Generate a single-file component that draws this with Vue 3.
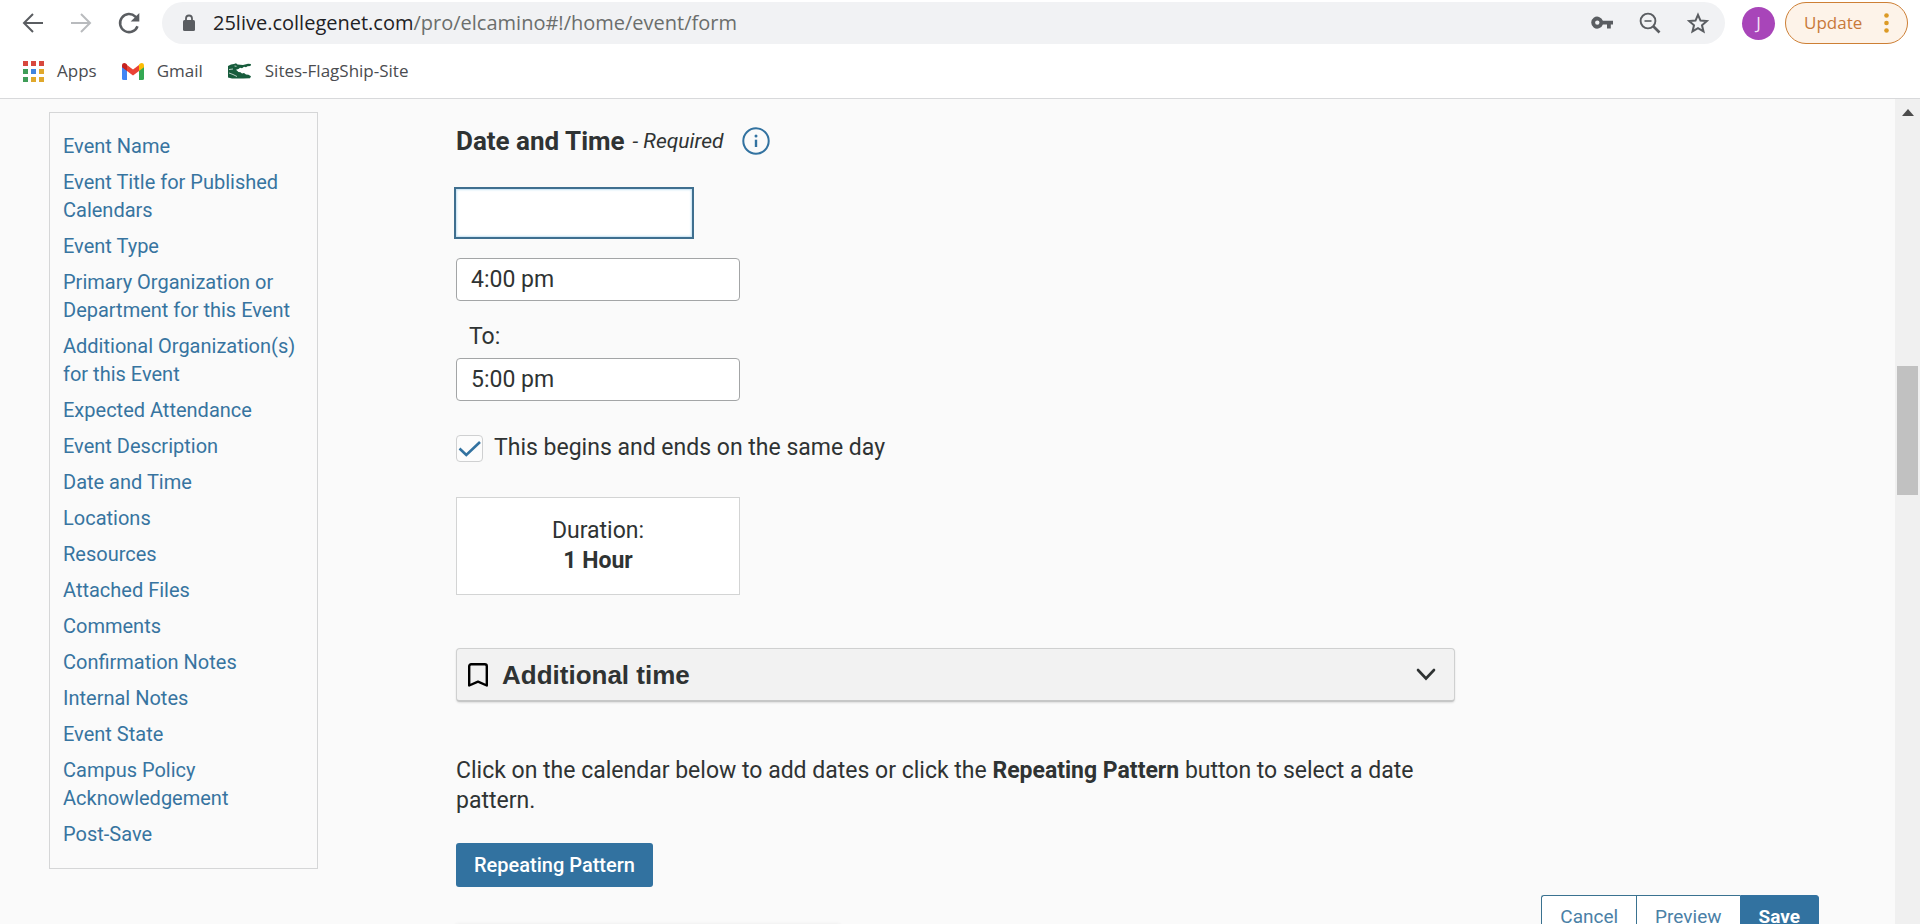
<script setup>
import { ref } from 'vue'

const sections = [
  'Event Name',
  'Event Title for Published Calendars',
  'Event Type',
  'Primary Organization or Department for this Event',
  'Additional Organization(s) for this Event',
  'Expected Attendance',
  'Event Description',
  'Date and Time',
  'Locations',
  'Resources',
  'Attached Files',
  'Comments',
  'Confirmation Notes',
  'Internal Notes',
  'Event State',
  'Campus Policy Acknowledgement',
  'Post-Save',
]

const eventDate = ref('')
const startTime = ref('4:00 pm')
const endTime = ref('5:00 pm')
const sameDay = ref(true)

const appColors = ['#d8483e', '#d8483e', '#d8483e', '#3f9d58', '#3f84e0', '#e0a82c', '#3f9d58', '#e0a82c', '#e0a82c']
</script>

<template>
  <div class="window">
    <header class="chrome">
      <div class="toolbar">
        <button class="icon-btn" aria-label="Back">
          <svg width="24" height="24" viewBox="0 0 24 24" fill="none" stroke="#5a5d61" stroke-width="2"><path d="M22 12H3M12 3l-9 9 9 9" /></svg>
        </button>
        <button class="icon-btn" aria-label="Forward">
          <svg width="24" height="24" viewBox="0 0 24 24" fill="none" stroke="#b9bbbe" stroke-width="2"><path d="M2 12h19M12 3l9 9-9 9" /></svg>
        </button>
        <button class="icon-btn" aria-label="Reload">
          <svg width="24" height="24" viewBox="0 0 24 24"><path d="M20.5 15.2A9 9 0 1 1 18.4 5.7L20 7.5" fill="none" stroke="#5a5d61" stroke-width="2.5" /><path d="M22.3 2v8.6h-8.6z" fill="#5a5d61" /></svg>
        </button>
        <div class="omnibox">
          <svg class="lock" width="14" height="18" viewBox="0 0 14 18"><rect x="1" y="6" width="12" height="11" rx="1.5" fill="#5a5d61" /><path d="M4 7V4.5a3 3 0 0 1 6 0V7" fill="none" stroke="#5a5d61" stroke-width="1.8" /></svg>
          <div class="url"><span class="host">25live.collegenet.com</span>/pro/elcamino#!/home/event/form</div>
          <button class="icon-btn" aria-label="Saved passwords">
            <svg width="24" height="24" viewBox="0 0 24 24"><path fill="#5a5d61" d="M12.9 9.7A6 6 0 1 0 12.9 13.5H17v4h3.8v-4H23V9.7zM7.3 13.8a2.2 2.2 0 1 1 0-4.4 2.2 2.2 0 0 1 0 4.4z" /></svg>
          </button>
          <button class="icon-btn" aria-label="Zoom">
            <svg width="24" height="24" viewBox="0 0 24 24" fill="none" stroke="#5a5d61"><circle cx="10" cy="10" r="7.4" stroke-width="1.9" /><path d="M6.5 10h7" stroke-width="1.6" /><path d="M15.5 15.5l6 6" stroke-width="2.6" /></svg>
          </button>
          <button class="icon-btn" aria-label="Bookmark this page">
            <svg width="24" height="24" viewBox="0 0 24 24"><path d="M12 3.8l2.5 5.8 6.3.5-4.8 4.2 1.5 6.1-5.5-3.3-5.5 3.3 1.5-6.1-4.8-4.2 6.3-.5z" fill="none" stroke="#5a5d61" stroke-width="2" /></svg>
          </button>
        </div>
        <button class="avatar" aria-label="Profile">J</button>
        <button class="update">
          <span>Update</span>
          <svg width="5" height="20" viewBox="0 0 5 20" fill="#dc9a25"><circle cx="2.5" cy="2.5" r="2.3" /><circle cx="2.5" cy="10" r="2.3" /><circle cx="2.5" cy="17.5" r="2.3" /></svg>
        </button>
      </div>
      <nav class="bookmarks" aria-label="Bookmarks">
        <a href="#apps">
          <svg width="21" height="21" viewBox="0 0 21 21"><rect v-for="(c, i) in appColors" :key="i" :x="(i % 3) * 8" :y="Math.floor(i / 3) * 8" width="5" height="5" :fill="c" /></svg>
          <span>Apps</span>
        </a>
        <a href="#gmail">
          <svg width="22" height="17" viewBox="0 0 22 17">
            <path d="M0 3v12.5A1.5 1.5 0 0 0 1.5 17H5V6z" fill="#4285f4" />
            <path d="M22 3v12.5a1.5 1.5 0 0 1-1.5 1.5H17V6z" fill="#34a853" />
            <path d="M5 2l6 4.5L17 2v6l-6 4.5L5 8z" fill="#ea4335" />
            <path d="M0 2.500C0 .2 2.500-.6 4.200.8L5 1.500V8L0 4.200z" fill="#c5221f" />
            <path d="M22 2.500C22 .2 19.500-.6 17.800.8L17 1.500V8l5-3.800z" fill="#fbbc04" />
          </svg>
          <span>Gmail</span>
        </a>
        <a href="#sites">
          <svg width="24" height="16" viewBox="0 0 24 16">
            <path d="M0 3L3 1.5 6 1l2-.8L9.500 1.500 15 2l5-1.200L23 1l-.5 2-3 .3-1.500 1-2-.5-2 1.500-2-.5-1.500 1.200L8 6.800 10.500 9l2 .2 1.500 1.300 2-.5 2 1.500 2.500.3 2.500 1.500-1 2L15 15.500H4L0 14.500z" fill="#175c3c" />
            <path d="M1 6.500l4-.5M1 10l4 1.500 4 2M6.500 3l2 .3" stroke="#fff" stroke-width=".7" fill="none" />
          </svg>
          <span>Sites-FlagShip-Site</span>
        </a>
      </nav>
    </header>

    <div class="viewport">
      <div class="page">
        <nav class="sections" aria-label="Form sections">
          <a v-for="s in sections" :key="s" href="#form">{{ s }}</a>
        </nav>

        <main id="form" class="form">
          <div class="heading">
            <h2>Date and Time</h2>
            <em>- Required</em>
            <button class="icon-btn info" aria-label="About date and time">
              <svg width="28" height="28" viewBox="0 0 28 28"><circle cx="14" cy="14" r="12.7" fill="none" stroke="#3272a0" stroke-width="2" /><circle cx="14" cy="9" r="1.5" fill="#3272a0" /><path d="M14 12.700v7.300" stroke="#3272a0" stroke-width="2.4" /></svg>
            </button>
          </div>

          <input v-model="eventDate" class="date" type="text" aria-label="Event date">
          <input v-model="startTime" class="time" type="text" aria-label="Start time">
          <label class="to" for="end-time">To:</label>
          <input id="end-time" v-model="endTime" class="time" type="text">

          <label class="same-day">
            <input v-model="sameDay" type="checkbox">
            <svg v-if="sameDay" width="27" height="27" viewBox="0 0 27 27" fill="none" stroke="#3272a0" stroke-width="2.6"><path d="M3.500 13.500l6.800 6.500L24 7" /></svg>
            <span>This begins and ends on the same day</span>
          </label>

          <div class="duration">
            <span>Duration:</span>
            <strong>1 Hour</strong>
          </div>

          <button class="accordion" aria-expanded="false">
            <svg width="20" height="24" viewBox="0 0 20 24" fill="none" stroke="#000" stroke-width="2.4" stroke-linejoin="round"><path d="M1.200 22.500V3.200a2 2 0 0 1 2-2h13.600a2 2 0 0 1 2 2v19.300L10 18.700z" /></svg>
            <span>Additional time</span>
            <svg class="chevron" width="20" height="14" viewBox="0 0 20 14" fill="none" stroke="#2f3333" stroke-width="2.6" stroke-linecap="round"><path d="M2 2l8 8.500L18 2" /></svg>
          </button>

          <p class="hint">Click on the calendar below to add dates or click the <strong>Repeating Pattern</strong> button to select a date pattern.</p>

          <button class="repeat">Repeating Pattern</button>

          <section class="calendar" aria-label="Calendar"></section>
        </main>
      </div>

      <div class="actions">
        <button>Cancel</button>
        <button>Preview</button>
        <button class="save">Save</button>
      </div>

      <div class="scrollbar" aria-hidden="true">
        <svg width="12" height="7" viewBox="0 0 12 7"><path d="M0 7l6-7 6 7z" fill="#4c4c4c" /></svg>
        <div class="thumb"></div>
      </div>
    </div>
  </div>
</template>

<style>
body {
  margin: 0;
  overflow: hidden;
}
</style>

<style scoped>
* {
  box-sizing: border-box;
}

.window {
  display: flex;
  flex-direction: column;
  height: 100vh;
  overflow: hidden;
  color: #2f3333;
  font-family: Roboto, "Liberation Sans", sans-serif;
  font-size: 23px;
  line-height: 30px;
}

button,
input {
  margin: 0;
  padding: 0;
  font: inherit;
  color: inherit;
}

svg {
  display: block;
  flex: none;
}

.icon-btn {
  flex: none;
  border: 0;
  background: none;
}

/* Browser bars */
.chrome {
  flex: none;
  border-bottom: 1px solid #d8d9db;
  background: #fff;
  font-family: "Open Sans", "Noto Sans", sans-serif;
}

.toolbar {
  display: flex;
  align-items: center;
  gap: 24px;
  padding: 2px 12px 0 21px;
}

.omnibox {
  display: flex;
  flex: 1;
  align-items: center;
  gap: 24px;
  height: 42px;
  margin-left: -3px;
  padding: 0 15px 0 20px;
  border-radius: 21px;
  background: #f1f2f4;
}

.url {
  flex: 1;
  margin-left: -7px;
  color: #6b6e6c;
  font-size: 20px;
  line-height: 28px;
  white-space: nowrap;
}

.host {
  color: #1f2225;
}

.avatar {
  width: 33px;
  height: 33px;
  margin-left: -7px;
  border: 0;
  border-radius: 50%;
  background: #a845b9;
  color: #f5e3f8;
  font-size: 17px;
  line-height: 24px;
}

.update {
  display: flex;
  align-items: center;
  justify-content: space-between;
  width: 123px;
  height: 42px;
  margin-left: -14px;
  padding: 0 18px;
  border: 1px solid #cd7f35;
  border-radius: 21px;
  background: #fdf3e9;
  color: #c8793a;
  font-size: 17px;
}

.bookmarks {
  display: flex;
  align-items: center;
  gap: 25px;
  height: 54px;
  padding: 0 23px;
}

.bookmarks a {
  display: flex;
  align-items: center;
  gap: 13px;
  color: #4a4c50;
  font-size: 17px;
  line-height: 24px;
  text-decoration: none;
}

/* Page */
.viewport {
  position: relative;
  display: flex;
  flex: 1;
  min-height: 0;
  overflow: hidden;
  background: #fafafa;
}

.page {
  display: flex;
  flex: 1;
  align-items: flex-start;
  gap: 138px;
  padding: 13px 49px 0;
}

.sections {
  display: flex;
  flex: none;
  flex-direction: column;
  gap: 8px;
  width: 269px;
  padding: 19px 13px 20px;
  border: 1px solid #d5d6d7;
}

.sections a {
  color: #3774a0;
  font-size: 20px;
  line-height: 28px;
  text-decoration: none;
}

.form {
  display: flex;
  flex: 1;
  flex-direction: column;
  align-items: flex-start;
  max-width: 999px;
  padding-top: 13px;
}

.heading {
  display: flex;
  align-items: center;
  gap: 8px;
}

.heading h2 {
  margin: 0;
  font-size: 26px;
  line-height: 32px;
}

.heading em {
  font-size: 21px;
  line-height: 32px;
}

.info {
  margin-left: 11px;
}

.date {
  width: 240px;
  height: 52px;
  margin: 30px 0 0 -2px;
  padding: 0 16px;
  border: 2px solid #3f6f8f;
  background: #fff;
  box-shadow: inset 0 0 2px 1px #c4e2f4;
}

.time {
  width: 284px;
  height: 43px;
  padding: 0 14px;
  border: 1px solid #a3a5a6;
  border-radius: 4px;
  background: #fff;
}

.date + .time {
  margin-top: 19px;
}

.to {
  margin: 21px 13px 6px;
}

.same-day {
  position: relative;
  display: flex;
  align-items: center;
  gap: 11px;
  margin-top: 32px;
}

.same-day input {
  appearance: none;
  width: 27px;
  height: 27px;
  border: 1px solid #cfd0d1;
  border-radius: 4px;
  background: #fcfcfc;
}

.same-day svg {
  position: absolute;
  left: 0;
  pointer-events: none;
}

.duration {
  display: flex;
  flex-direction: column;
  width: 284px;
  margin-top: 34px;
  padding: 18px;
  border: 1px solid #d3d4d4;
  background: #fff;
  text-align: center;
}

.accordion {
  display: flex;
  align-items: center;
  gap: 14px;
  width: 100%;
  height: 54px;
  margin-top: 53px;
  padding: 0 18px 0 11px;
  border: 1px solid #cfd0d0;
  border-bottom: 2px solid #c6c7c7;
  border-radius: 4px;
  background: #f2f2f2;
  box-shadow: 0 1px 2px #dedede;
  font-family: "Liberation Sans", sans-serif;
  font-size: 26px;
  font-weight: 700;
}

.chevron {
  margin-left: auto;
}

.hint {
  margin: 54px 0 0;
}

.repeat {
  height: 44px;
  margin-top: 27px;
  padding: 0 18px;
  border: 0;
  border-radius: 3px;
  background: #3272a0;
  color: #fff;
  font-size: 20px;
  font-weight: 500;
}

.calendar {
  width: 384px;
  height: 320px;
  margin-top: 38px;
  background: #fff;
  box-shadow: 0 0 4px #e2e2e2;
}

.actions {
  position: absolute;
  right: 101px;
  bottom: -15px;
  display: flex;
}

.actions button {
  height: 44px;
  padding: 0 18px;
  border: 1px solid #3a7290;
  border-right: 0;
  background: #fff;
  color: #4a80a6;
  font-size: 19px;
}

.actions button:first-child {
  border-radius: 3px 0 0 3px;
}

.actions .save {
  border: 1px solid #3272a0;
  border-radius: 0 3px 3px 0;
  background: #3272a0;
  color: #fff;
  font-weight: 700;
}

.scrollbar {
  display: flex;
  flex: none;
  flex-direction: column;
  align-items: center;
  width: 25px;
  padding-top: 10px;
  background: #f0f0f0;
}

.thumb {
  width: 21px;
  height: 129px;
  margin-top: 250px;
  background: #c1c1c1;
}
</style>
